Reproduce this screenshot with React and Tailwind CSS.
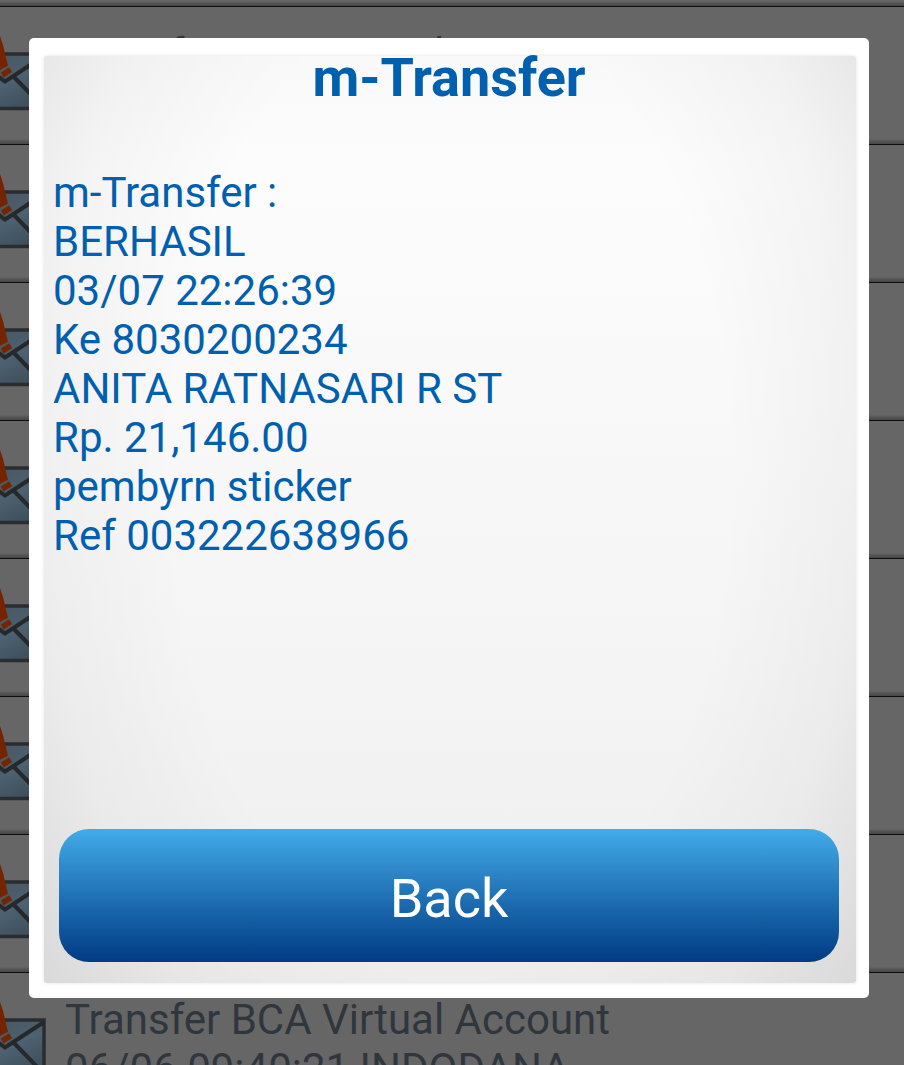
const rows = [
  { title: "Transfer BCA Virtual Account" },
  {},
  {},
  {},
  {},
  {},
  {},
  { title: "Transfer BCA Virtual Account", detail: "06/06 09:40:21 INDODANA" },
];

const details = [
  "m-Transfer :",
  "BERHASIL",
  "03/07 22:26:39",
  "Ke 8030200234",
  "ANITA RATNASARI R ST",
  "Rp. 21,146.00",
  "pembyrn sticker",
  "Ref 003222638966",
];

function EnvelopeIcon() {
  return (
    <svg className="h-[120px] w-12 shrink-0" viewBox="0 0 48 120" aria-hidden="true">
      <defs>
        <linearGradient id="paper" gradientUnits="userSpaceOnUse" x1="0" y1="46" x2="30" y2="106">
          <stop offset="0" stopColor="#485661" />
          <stop offset="0.45" stopColor="#4d6170" />
          <stop offset="1" stopColor="#3b4a56" />
        </linearGradient>
      </defs>
      <rect x="-40" y="47" width="84" height="54.500" fill="url(#paper)" stroke="#2a2d30" strokeWidth="3.500" />
      <path d="M44 49L5 74.500L-6 66M14 70L45 102" fill="none" stroke="#26292c" strokeWidth="4" />
      <path d="M-6 20L0 29L3 38L8 59L-2 64L-6 64Z" fill="#742400" />
      <path d="M-2 64L8.500 58.500L13 65.500L4 71.500L-1 67Z" fill="#50565a" />
      <path d="M1 65.500L9 60.500L12 65L3.500 70.500Z" fill="#742400" />
    </svg>
  );
}

function HistoryRow({ title, detail }) {
  return (
    <li className="flex h-[138px] shrink-0 items-start gap-[17px] overflow-hidden border-b border-[#0c0c0c] bg-[linear-gradient(to_top,#464646,#565656_3px,#666666_5px)]">
      <EnvelopeIcon />
      <div className="pt-[22px] text-[42px] leading-[49px] whitespace-nowrap text-[#30363d]">
        {title && <p>{title}</p>}
        {detail && <p>{detail}</p>}
      </div>
    </li>
  );
}

export default function App() {
  return (
    <div className="relative h-screen overflow-hidden bg-[#666666] font-[Roboto,sans-serif]">
      <ul className="flex flex-col">
        <li className="h-[7px] shrink-0 border-b border-[#0c0c0c] bg-[linear-gradient(to_top,#464646,#565656_3px,#666666_5px)]" />
        {rows.map((row, i) => (
          <HistoryRow key={i} {...row} />
        ))}
      </ul>
      <div className="absolute inset-0 flex pt-[38px] pr-[35px] pb-[67px] pl-[29px]">
        <section
          role="dialog"
          aria-modal="true"
          aria-labelledby="dialog-title"
          className="flex flex-1 rounded-[5px] bg-white pt-[18px] pr-[13px] pb-[15px] pl-[15px]"
        >
          <div className="flex flex-1 flex-col rounded-[3px] bg-[radial-gradient(ellipse_62%_92%_at_50%_45%,transparent_55%,rgba(0,0,0,0.03)_80%,rgba(0,0,0,0.085)_100%),linear-gradient(to_bottom,#f9f9f9,#fcfcfc_12%,#f9f9f9_35%,#f4f4f4_68%,#eeeeee)] pr-[11px] pl-[9px] shadow-[0_0_3px_1px_#efefef]">
            <h1 id="dialog-title" className="text-center text-[54px] leading-[44px] font-bold text-[#0060af]">
              m-Transfer
            </h1>
            <div className="mt-[68px] text-[42px] leading-[49px] text-[#0060af]">
              {details.map((line) => (
                <p key={line}>{line}</p>
              ))}
            </div>
            <div className="mt-auto flex px-[6px] pb-[21px]">
              <button
                type="button"
                className="h-[133px] flex-1 rounded-[30px] bg-linear-to-b from-[#43abe9] to-[#033b84] pt-[6px] text-[54px] text-white"
              >
                Back
              </button>
            </div>
          </div>
        </section>
      </div>
    </div>
  );
}
